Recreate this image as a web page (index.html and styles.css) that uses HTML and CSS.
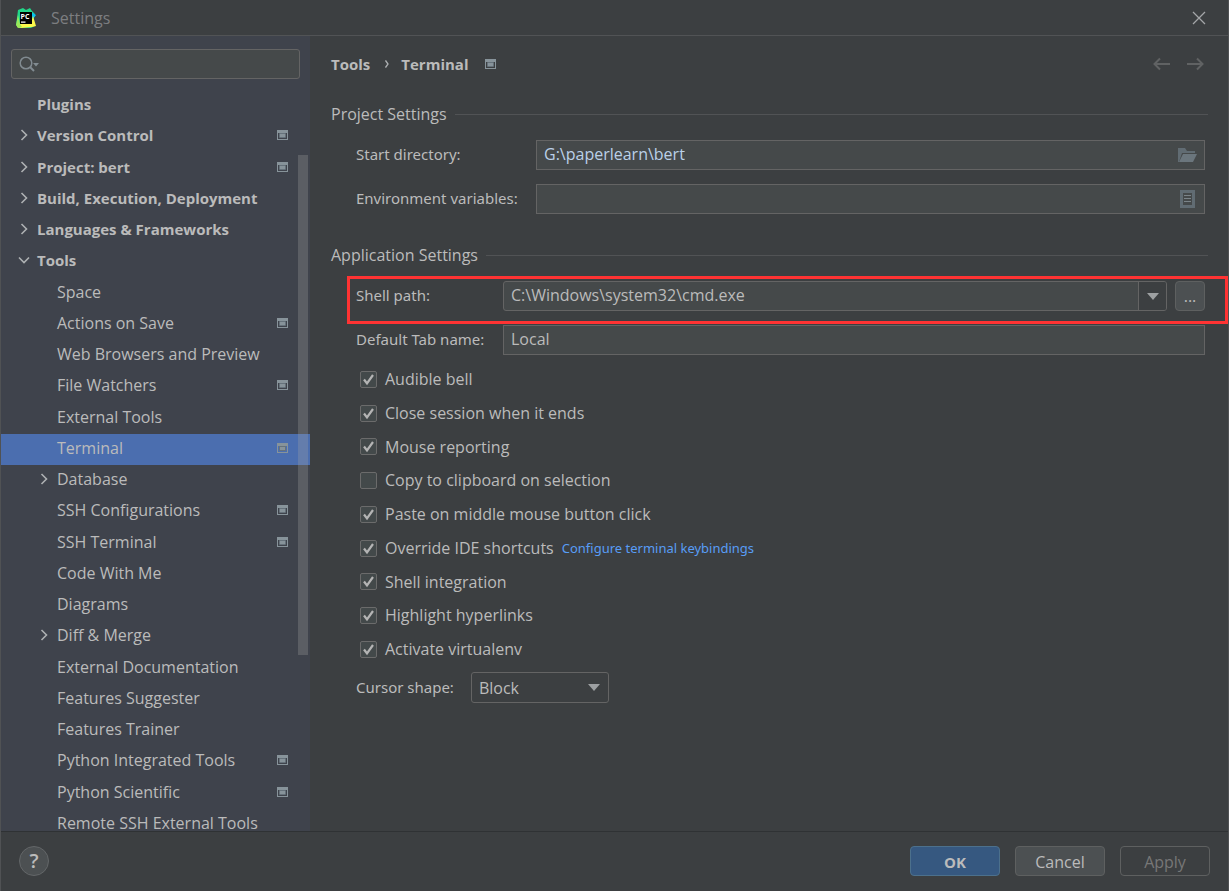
FILE: index.html
```html
<!DOCTYPE html>
<html lang="en">
<head>
<meta charset="utf-8">
<title>Settings</title>
<link rel="stylesheet" href="styles.css">
</head>
<body>
<svg class="defs" width="0" height="0" aria-hidden="true">
  <symbol id="proj" viewBox="0 0 11 10"><path fill="#87939a" fill-rule="evenodd" d="M0 0h11v10H0zM1 3v6h9V3z"/><path fill="#87939a" d="M3 4h5v3H3z"/><path fill="none" stroke="#66727b" d="M2.500 3.500h6v4h-6z"/></symbol>
  <symbol id="right" viewBox="0 0 12 12"><path d="M3.500 1l5 5-5 5" fill="none" stroke="#adb0b2" stroke-width="1.600"/></symbol>
  <symbol id="down" viewBox="0 0 12 12"><path d="M1 3.500l5 5 5-5" fill="none" stroke="#adb0b2" stroke-width="1.600"/></symbol>
</svg>
<div class="window">
  <header class="titlebar">
    <svg class="logo" viewBox="0 0 20 20">
      <path fill="#21d789" d="M2 2l5-2 3 2 4-2 2 3 3 3-2 6 2 6-4 2H3l-3-3 1-7z"/>
      <path fill="#07c3f2" d="M15 4l5 3-3 4z"/>
      <path fill="#fcf84a" d="M1 15l4 1 10-1 2-7 3 10-4 1-11 1-4-1z"/>
      <path fill="#9be85a" d="M0 17l2-10 2 9 2 3-4 1z"/>
      <path d="M4 4h12v12H4z"/>
      <path fill="#fff" d="M5 13.500h4.500v1.200H5z"/>
      <text class="logo-text" x="4.500" y="10.500">PC</text>
    </svg>
    <h1 class="title">Settings</h1>
    <button class="icon-btn close" aria-label="Close"><svg width="14" height="14" viewBox="0 0 14 14"><path d="M1 1l12 12M13 1L1 13" stroke="#a4a6a8" stroke-width="1.300"/></svg></button>
  </header>
  <div class="body">
    <nav class="sidebar" aria-label="Settings categories">
      <label class="search">
        <svg width="22" height="18" viewBox="0 0 22 18"><circle cx="7" cy="8" r="5.800" fill="none" stroke="#818b91" stroke-width="1.500"/><path d="M11 12l4 4" stroke="#818b91" stroke-width="2"/><path d="M14 8h6l-3 3.500z" fill="#818b91"/></svg>
        <input class="search-input" type="text" aria-label="Search settings">
      </label>
      <ul class="tree">
        <li class="row top"><span class="arrow"></span><span class="name">Plugins</span></li>
        <li class="row top"><svg class="arrow"><use href="#right"/></svg><span class="name">Version Control</span><svg class="proj"><use href="#proj"/></svg></li>
        <li class="row top"><svg class="arrow"><use href="#right"/></svg><span class="name">Project: bert</span><svg class="proj"><use href="#proj"/></svg></li>
        <li class="row top"><svg class="arrow"><use href="#right"/></svg><span class="name">Build, Execution, Deployment</span></li>
        <li class="row top"><svg class="arrow"><use href="#right"/></svg><span class="name">Languages &amp; Frameworks</span></li>
        <li class="row top"><svg class="arrow"><use href="#down"/></svg><span class="name">Tools</span></li>
        <li class="row"><span class="arrow"></span><span class="name">Space</span></li>
        <li class="row"><span class="arrow"></span><span class="name">Actions on Save</span><svg class="proj"><use href="#proj"/></svg></li>
        <li class="row"><span class="arrow"></span><span class="name">Web Browsers and Preview</span></li>
        <li class="row"><span class="arrow"></span><span class="name">File Watchers</span><svg class="proj"><use href="#proj"/></svg></li>
        <li class="row"><span class="arrow"></span><span class="name">External Tools</span></li>
        <li class="row selected"><span class="arrow"></span><span class="name">Terminal</span><svg class="proj"><use href="#proj"/></svg></li>
        <li class="row"><svg class="arrow"><use href="#right"/></svg><span class="name">Database</span></li>
        <li class="row"><span class="arrow"></span><span class="name">SSH Configurations</span><svg class="proj"><use href="#proj"/></svg></li>
        <li class="row"><span class="arrow"></span><span class="name">SSH Terminal</span><svg class="proj"><use href="#proj"/></svg></li>
        <li class="row"><span class="arrow"></span><span class="name">Code With Me</span></li>
        <li class="row"><span class="arrow"></span><span class="name">Diagrams</span></li>
        <li class="row"><svg class="arrow"><use href="#right"/></svg><span class="name">Diff &amp; Merge</span></li>
        <li class="row"><span class="arrow"></span><span class="name">External Documentation</span></li>
        <li class="row"><span class="arrow"></span><span class="name">Features Suggester</span></li>
        <li class="row"><span class="arrow"></span><span class="name">Features Trainer</span></li>
        <li class="row"><span class="arrow"></span><span class="name">Python Integrated Tools</span><svg class="proj"><use href="#proj"/></svg></li>
        <li class="row"><span class="arrow"></span><span class="name">Python Scientific</span><svg class="proj"><use href="#proj"/></svg></li>
        <li class="row"><span class="arrow"></span><span class="name">Remote SSH External Tools</span></li>
      </ul>
      <div class="scrollbar"></div>
    </nav>
    <main class="main">
      <div class="crumbs">
        <span>Tools</span>
        <svg class="crumb-sep" viewBox="0 0 4 8"><path d="M.5 .5L3 4 .5 7.500" fill="none" stroke="#adb0b2" stroke-width="1.300"/></svg>
        <span>Terminal</span>
        <svg class="proj crumb-proj"><use href="#proj"/></svg>
        <button class="icon-btn" aria-label="Back"><svg width="17" height="14" viewBox="0 0 17 14"><path d="M17 7H2M7 1.500L1.500 7 7 12.500" fill="none" stroke="#606263" stroke-width="2"/></svg></button>
        <button class="icon-btn" aria-label="Forward"><svg width="17" height="14" viewBox="0 0 17 14"><path d="M0 7h15M10 1.500L15.500 7 10 12.500" fill="none" stroke="#606263" stroke-width="2"/></svg></button>
      </div>
      <section class="group">
        <h2 class="heading">Project Settings</h2>
        <div class="field">
          <label class="label wide" for="dir">Start directory:</label>
          <div class="box">
            <input class="input path" id="dir" type="text" value="G:\paperlearn\bert">
            <button class="icon-btn" aria-label="Browse"><svg width="19" height="15" viewBox="0 0 19 15"><path fill="#616c73" d="M0 14V0h7l2 3h8v2H4L1 14z"/><path fill="#6b767d" d="M5 6h14l-4 8H1z"/></svg></button>
          </div>
        </div>
        <div class="field">
          <label class="label wide" for="env">Environment variables:</label>
          <div class="box">
            <input class="input" id="env" type="text">
            <button class="icon-btn list" aria-label="Edit variables"><svg width="15" height="18" viewBox="0 0 15 18"><path fill="none" stroke="#616c73" stroke-width="3" d="M1.500 1.500h12v15h-12z"/><path stroke="#7b8489" d="M4 5.500h7M4 8.500h7M4 11.500h7"/></svg></button>
          </div>
        </div>
      </section>
      <section class="group app">
        <h2 class="heading">Application Settings</h2>
        <div class="field marked">
          <label class="label" for="shell">Shell path:</label>
          <div class="box combo">
            <input class="input" id="shell" type="text" value="C:\Windows\system32\cmd.exe">
            <button class="drop" aria-label="Show shells"><svg width="12" height="7" viewBox="0 0 12 7"><path fill="#9da0a2" d="M0 0h12L6 7z"/></svg></button>
          </div>
          <button class="more" aria-label="Browse shell">...</button>
        </div>
        <div class="field">
          <label class="label" for="tab">Default Tab name:</label>
          <div class="box"><input class="input" id="tab" type="text" value="Local"></div>
        </div>
        <ul class="checks">
          <li class="check"><label class="check-label"><input class="tick" type="checkbox" checked>Audible bell</label></li>
          <li class="check"><label class="check-label"><input class="tick" type="checkbox" checked>Close session when it ends</label></li>
          <li class="check"><label class="check-label"><input class="tick" type="checkbox" checked>Mouse reporting</label></li>
          <li class="check"><label class="check-label"><input class="tick" type="checkbox">Copy to clipboard on selection</label></li>
          <li class="check"><label class="check-label"><input class="tick" type="checkbox" checked>Paste on middle mouse button click</label></li>
          <li class="check"><label class="check-label"><input class="tick" type="checkbox" checked>Override IDE shortcuts</label><a class="link" href="#">Configure terminal keybindings</a></li>
          <li class="check"><label class="check-label"><input class="tick" type="checkbox" checked>Shell integration</label></li>
          <li class="check"><label class="check-label"><input class="tick" type="checkbox" checked>Highlight hyperlinks</label></li>
          <li class="check"><label class="check-label"><input class="tick" type="checkbox" checked>Activate virtualenv</label></li>
        </ul>
        <div class="cursor">
          <label class="cursor-label" for="cursor">Cursor shape:</label>
          <select class="select" id="cursor"><option>Block</option><option>Underline</option><option>Vertical</option></select>
        </div>
      </section>
    </main>
  </div>
  <footer class="footer">
    <button class="help" aria-label="Help">?</button>
    <button class="btn primary">OK</button>
    <button class="btn">Cancel</button>
    <button class="btn ghost" disabled>Apply</button>
  </footer>
</div>
</body>
</html>
```
FILE: styles.css
```css
* { box-sizing: border-box; }
body {
  margin: 0;
  background: #3c3f41;
  color: #bbbbbb;
  font: 16px/20px "Open Sans", "Noto Sans", sans-serif;
}
button, input, select { font: inherit; color: inherit; margin: 0; padding: 0; }
ul { list-style: none; margin: 0; padding: 0; }
.defs { position: absolute; }
.window {
  display: flex;
  flex-direction: column;
  height: 100vh;
  border: solid #505254;
  border-width: 0 1px;
}
.titlebar {
  display: flex;
  align-items: center;
  gap: 15px;
  height: 36px;
  padding: 0 22px 0 15px;
  border-bottom: 1px solid #515355;
  flex: none;
}
.logo { width: 20px; height: 20px; }
.logo-text { font: bold 7px "Open Sans", sans-serif; fill: #ffffff; }
.title { margin: 0; font-size: 16px; font-weight: 400; color: #7c7e80; }
.icon-btn { display: flex; border: 0; background: none; }
.close { margin-left: auto; }

.body { display: flex; flex: 1; min-height: 0; }
.sidebar {
  position: relative;
  flex: none;
  width: 309px;
  padding-top: 13px;
  background: #3f434c;
  overflow: hidden;
}
.search {
  display: flex;
  align-items: center;
  height: 30px;
  margin: 0 10px;
  padding: 0 7px;
  background: #45494a;
  border: 1px solid #646464;
  border-radius: 3px;
}
.search-input { flex: 1; min-width: 0; border: 0; background: none; outline: 0; }
.tree { margin-top: 11px; }
.row {
  display: flex;
  align-items: center;
  gap: 7px;
  height: 31px;
  padding: 0 22px 3px 37px;
}
.row:nth-child(4n+2) { margin-bottom: 1px; }
.row.top { padding-left: 17px; font-size: 15px; font-weight: 700; }
.row.selected { background: #4b6eaf; }
.arrow { width: 12px; height: 12px; flex: none; }
.name { flex: 1; white-space: nowrap; }
.proj { width: 11px; height: 10px; flex: none; }
.scrollbar {
  position: absolute;
  right: 2px;
  top: 119px;
  width: 10px;
  height: 500px;
  background: rgba(166, 166, 166, 0.28);
}

.main { flex: 1; min-width: 0; padding: 13px 20px 0 21px; }
.crumbs {
  display: flex;
  align-items: center;
  height: 30px;
  font-size: 15px;
  font-weight: 700;
}
.crumb-sep { width: 4px; height: 8px; margin: 0 12px 0 15px; }
.crumb-proj { margin: 0 auto 0 17px; }
.crumbs .icon-btn { margin-right: 4px; }
.crumbs .icon-btn + .icon-btn { margin-left: 13px; }
.group { margin-top: 23px; }
.app { margin-top: 29px; }
.heading {
  display: flex;
  align-items: center;
  gap: 8px;
  height: 24px;
  margin: 0;
  font-size: 16px;
  font-weight: 400;
}
.heading::after { content: ""; flex: 1; height: 1px; background: #515355; }
.field {
  position: relative;
  display: flex;
  align-items: center;
  height: 30px;
  margin-top: 14px;
  padding: 0 3px 0 25px;
}
.label, .cursor-label {
  padding-bottom: 2px;
  font: 15px/20px "Noto Sans", "Open Sans", sans-serif;
}
.label { flex: none; width: 147px; }
.label.wide { width: 180px; }
.box {
  display: flex;
  align-items: center;
  flex: 1;
  align-self: stretch;
  padding-right: 7px;
  background: #45494a;
  border: 1px solid #646464;
}
.input {
  flex: 1;
  min-width: 0;
  padding: 0 0 2px 7px;
  border: 0;
  outline: 0;
  background: none;
}
.path { color: #bbd0e8; }
.list { margin-right: 2px; }
.combo { padding: 0; border-radius: 3px; overflow: hidden; }
.drop {
  display: flex;
  align-items: center;
  justify-content: center;
  align-self: stretch;
  width: 28px;
  border: 0;
  border-left: 1px solid #646464;
  background: #3c3f41;
}
.more {
  width: 30px;
  height: 30px;
  margin-left: 8px;
  border: 1px solid #5e6060;
  border-radius: 4px;
  background: #4c5052;
}
.marked::after {
  content: "";
  position: absolute;
  inset: -5px -20px -13px 16px;
  border: 3px solid #ff3333;
  pointer-events: none;
}
.checks { margin-top: 7px; padding-left: 29px; }
.check { display: flex; align-items: center; gap: 8px; height: 34px; }
.check:nth-child(4n+3) { height: 33px; }
.check-label { display: flex; align-items: center; gap: 8px; }
.tick {
  appearance: none;
  width: 17px;
  height: 17px;
  border: 1px solid #6b6b6b;
  border-radius: 2px;
  background: #43494a;
}
.tick:checked {
  background: #43494a url("data:image/svg+xml,%3Csvg xmlns='http://www.w3.org/2000/svg' viewBox='0 0 15 15'%3E%3Cpath d='M3 7.500l3 4L12 3' fill='none' stroke='%23b4b4b4' stroke-width='2.200'/%3E%3C/svg%3E") center / 15px 15px no-repeat;
}
.link { font: 13px/20px "Noto Sans", "Open Sans", sans-serif; color: #589df6; text-decoration: none; }
.cursor { display: flex; align-items: center; gap: 17px; margin-top: 6px; padding-left: 25px; }
.select {
  appearance: none;
  width: 138px;
  height: 31px;
  padding: 0 28px 0 7px;
  border: 1px solid #646464;
  border-radius: 3px;
  background: #3c3f41 url("data:image/svg+xml,%3Csvg xmlns='http://www.w3.org/2000/svg' viewBox='0 0 12 7'%3E%3Cpath d='M0 0h12L6 7z' fill='%239da0a2'/%3E%3C/svg%3E") right 8px center / 12px 7px no-repeat;
}
.footer {
  display: flex;
  align-items: center;
  gap: 15px;
  flex: none;
  height: 60px;
  padding: 0 18px 1px 18px;
  border-top: 1px solid #2f3234;
}
.help {
  width: 30px;
  height: 30px;
  margin-right: auto;
  border: 1px solid #636668;
  border-radius: 50%;
  background: #4c5052;
  font-size: 20px;
  font-weight: 600;
}
.btn {
  width: 90px;
  height: 30px;
  padding-top: 2px;
  border: 1px solid #5e6060;
  border-radius: 4px;
  background: #4c5052;
}
.primary { border-color: #4c708c; background: #365880; font-size: 15px; font-weight: 700; }
.ghost { background: none; color: #777777; }
```
